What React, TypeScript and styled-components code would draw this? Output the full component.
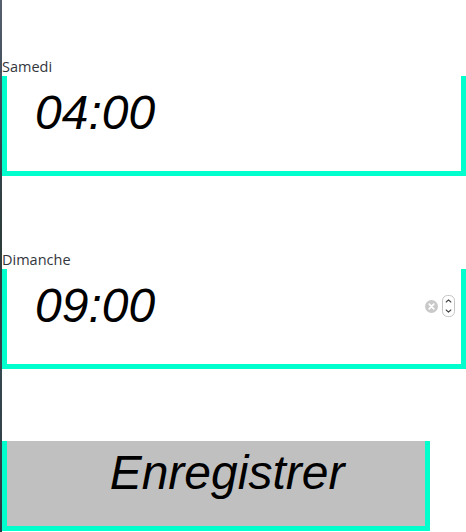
import React from 'react';
import styled, { createGlobalStyle } from 'styled-components';

const GlobalStyle = createGlobalStyle`
  html, body {
    margin: 0;
    padding: 0;
  }
  body {
    background: linear-gradient(
      180deg,
      #56606e 0%,
      #3d4a58 20%,
      #2b3c3a 45%,
      #36474f 70%,
      #2e3b44 100%
    );
  }
`;

const teal = '#00ffcc';

const Page = styled.div`
  margin-left: 2px;
  width: 464px;
  min-height: 532px;
  background: #fff;
  padding-top: 58px;
  box-sizing: border-box;
  display: flex;
  flex-direction: column;
`;

const Field = styled.div<{ $gap?: number }>`
  display: flex;
  flex-direction: column;
  margin-top: ${(p) => p.$gap ?? 0}px;
`;

const Label = styled.label`
  font-family: 'Open Sans', 'Noto Sans', sans-serif;
  font-size: 14.5px;
  line-height: 18px;
  color: #33363d;
`;

const TimeBox = styled.div`
  display: flex;
  align-items: flex-start;
  align-self: stretch;
  height: 100px;
  box-sizing: border-box;
  border: 5px solid ${teal};
  border-top: none;
  padding: 9px 6px 0 28px;
`;

const TimeRow = styled.div`
  flex: 1;
  display: flex;
  align-items: center;
  height: 56px;
`;

const TimeValue = styled.span`
  font-family: 'Liberation Sans', Arial, sans-serif;
  font-style: italic;
  font-size: 48px;
  line-height: 56px;
  color: #000;
`;

const Controls = styled.div`
  margin-left: auto;
  display: flex;
  align-items: center;
  gap: 4px;
`;

const ClearIcon = () => (
  <svg width="13" height="13" viewBox="0 0 13 13">
    <circle cx="6.5" cy="6.5" r="6.5" fill="#c9c9c9" />
    <path d="M4.2 4.2 L8.8 8.8 M8.8 4.2 L4.2 8.8" stroke="#fff" strokeWidth="1.7" strokeLinecap="round" />
  </svg>
);

const SpinIcon = () => (
  <svg width="13" height="22" viewBox="0 0 13 22">
    <rect x="0.5" y="0.5" width="12" height="21" rx="5" fill="#fff" stroke="#c4c4c4" />
    <path d="M4.2 7 L6.5 4.8 L8.8 7" fill="none" stroke="#444" strokeWidth="1.1" strokeLinecap="round" strokeLinejoin="round" />
    <path d="M4.2 15 L6.5 17.2 L8.8 15" fill="none" stroke="#444" strokeWidth="1.1" strokeLinecap="round" strokeLinejoin="round" />
  </svg>
);

const SaveButton = styled.button`
  margin-top: 72px;
  width: 428px;
  height: 90px;
  box-sizing: border-box;
  background: #c0c0c0;
  border: 5px solid ${teal};
  border-top: none;
  padding: 4px 0 0 22px;
  display: flex;
  justify-content: center;
  align-items: flex-start;
  font-family: 'Liberation Sans', Arial, sans-serif;
  font-style: italic;
  font-size: 48px;
  line-height: 56px;
  color: #000;
  cursor: pointer;
`;

type TimeFieldProps = {
  label: string;
  value: string;
  gap?: number;
  controls?: boolean;
};

const TimeField: React.FC<TimeFieldProps> = ({ label, value, gap, controls }) => (
  <Field $gap={gap}>
    <Label>{label}</Label>
    <TimeBox>
      <TimeRow>
        <TimeValue>{value}</TimeValue>
        {controls && (
          <Controls>
            <ClearIcon />
            <SpinIcon />
          </Controls>
        )}
      </TimeRow>
    </TimeBox>
  </Field>
);

const App: React.FC = (): JSX.Element => {
  return (
    <>
      <GlobalStyle />
      <Page>
        <TimeField label="Samedi" value="04:00" />
        <TimeField label="Dimanche" value="09:00" gap={75} controls />
        <SaveButton type="button">Enregistrer</SaveButton>
      </Page>
    </>
  );
};

export default App;
